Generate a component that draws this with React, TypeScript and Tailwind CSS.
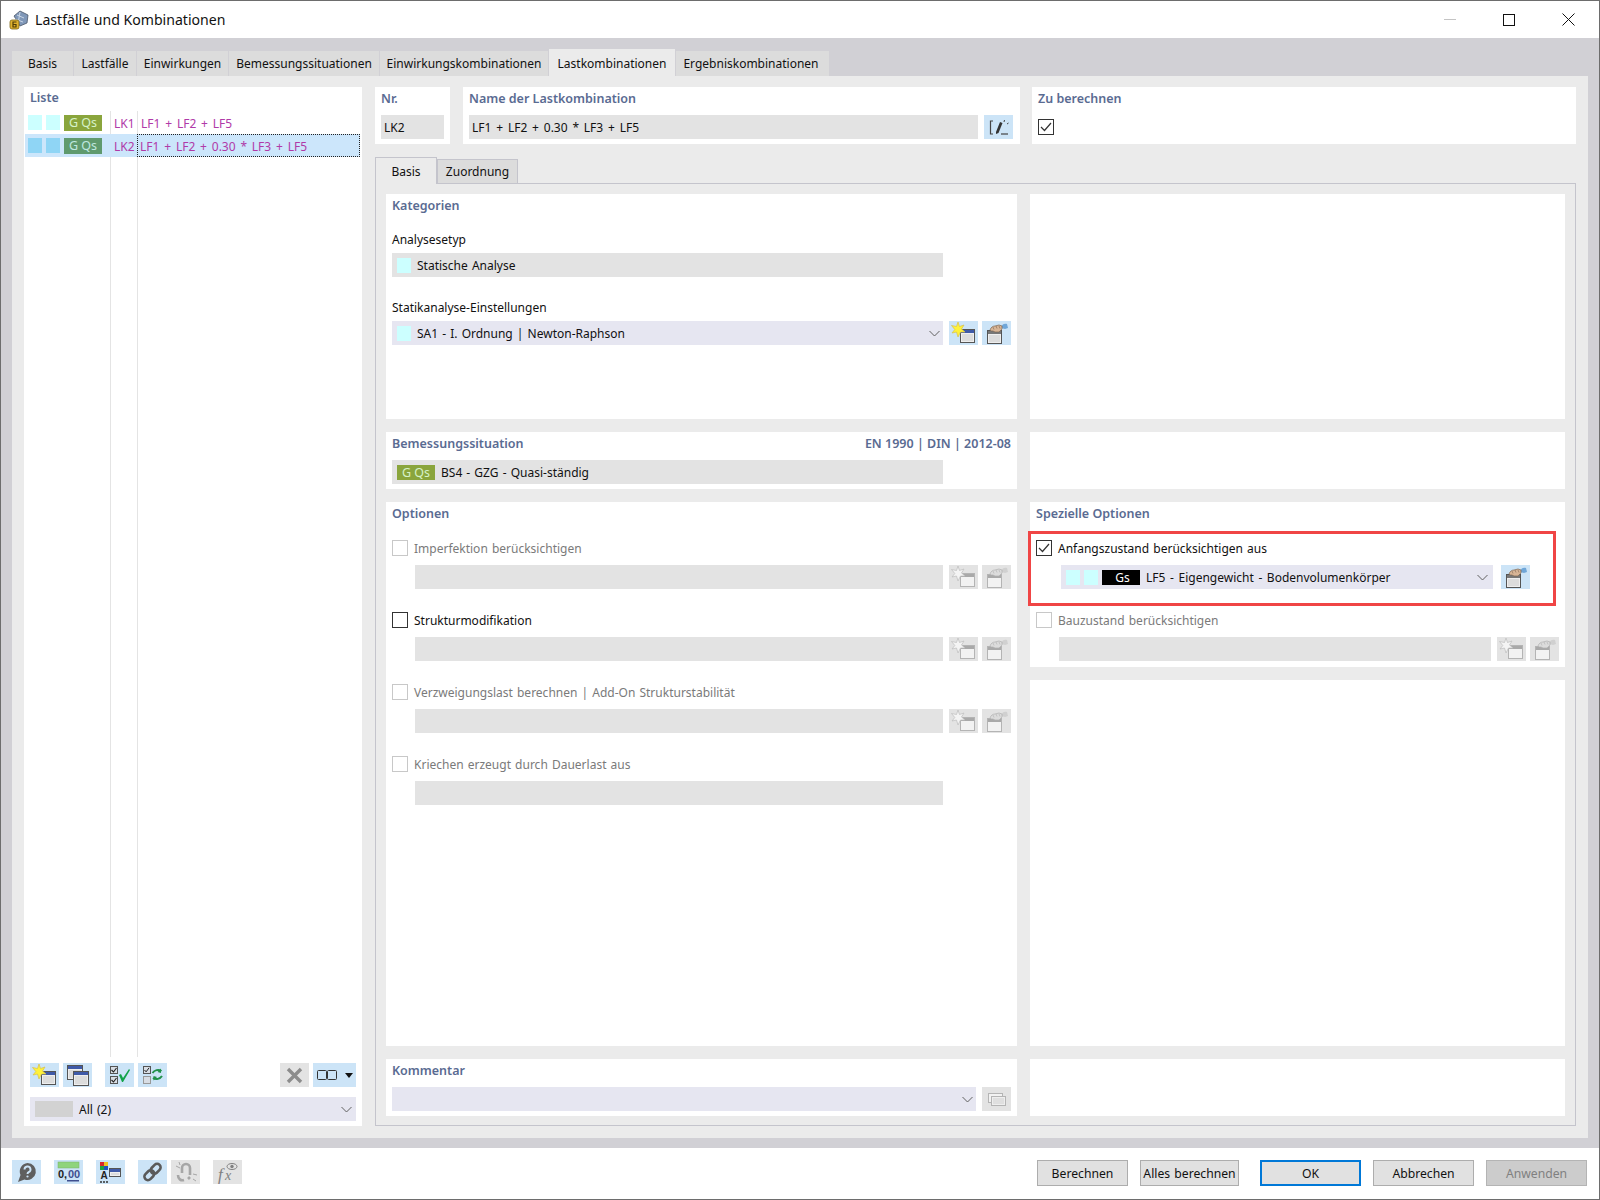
import React from "react";

const font = { fontFamily: '"Noto Sans", "Liberation Sans", sans-serif' };

function Win({ x, y, w, h, gray, bar }: { x: number; y: number; w: number; h: number; gray?: boolean; bar?: string }) {
  return (
    <g>
      <rect x={x + 0.5} y={y + 0.5} width={w} height={h} fill={gray ? "#f2f2f2" : "#eeeeee"} stroke={gray ? "#b4b4b4" : "#555"} />
      <rect x={x + 1} y={y + 1} width={w - 1} height={3} fill={gray ? "#a9a9a9" : bar || "#3f5aa8"} />
      {!gray && <rect x={x + 2} y={y + 5} width={w - 3} height={h - 6} fill="#dcdcdc" />}
    </g>
  );
}

function Star({ gray }: { gray?: boolean }) {
  return (
    <path
      d="M9 1l1.500 4.500 4.500-1.500-2.500 4 3.500 3-4.500 0L9 16 7.500 11 3 12l2.800-3.500L2.500 4.500l5 1z"
      fill={gray ? "#f4f4f4" : "#fff23a"}
      stroke={gray ? "#bdbdbd" : "#d9c24a"}
      strokeWidth="0.7"
    />
  );
}

function NewIcon({ gray }: { gray?: boolean }) {
  return (
    <svg width="29" height="24" viewBox="0 0 29 24">
      <Win x={11} y={8} w={14} h={13} gray={gray} />
      <Star gray={gray} />
    </svg>
  );
}

function EditIcon({ gray }: { gray?: boolean }) {
  const skin = gray ? "#dcdcdc" : "#d8b596";
  const line = gray ? "#b0b0b0" : "#7d6552";
  return (
    <svg width="29" height="24" viewBox="0 0 29 24">
      <Win x={5} y={9} w={14} h={13} gray={gray} bar="#777" />
      <path d="M19 7c0-3 3-5 6-4l1 4-3 1z" fill={gray ? "#d0d0d0" : "#6fa6d8"} />
      <path d="M8 9c1-3 3-4 5-4l4-1 3 1 0 3-3 3-4 0-2-1-2 0z" fill={skin} stroke={line} strokeWidth="0.7" />
      <path d="M11 6l1 2.500M14 5l1 2.500M17 5l1 2.500" stroke={line} strokeWidth="0.6" />
    </svg>
  );
}

function IconBtn({ children, disabled, w }: { children?: React.ReactNode; disabled?: boolean; w?: string }) {
  return (
    <div className={`flex h-[24px] items-center justify-center shrink-0 ${w || "w-[29px]"} ${disabled ? "bg-[#e3e3e3]" : "bg-[#cce4f7]"}`}>
      {children}
    </div>
  );
}

function Chevron() {
  return (
    <svg width="11" height="7" viewBox="0 0 11 7" className="shrink-0">
      <path d="M.5 1l5 5 5-5" fill="none" stroke="#606060" strokeWidth="1" />
    </svg>
  );
}

function Swatch({ c = "bg-[#ccffff]" }: { c?: string }) {
  return <div className={`h-[15px] w-[14px] shrink-0 ${c}`} />;
}

function Head({ children }: { children: React.ReactNode }) {
  return <div className="pt-[1px] text-[12.5px] font-semibold leading-[18px] text-[#5a6b92] [word-spacing:0px]">{children}</div>;
}

function Check({ checked, state }: { checked?: boolean; state: "on" | "off" }) {
  return (
    <div className={`flex h-[16px] w-[16px] shrink-0 items-center justify-center border ${state === "on" ? "border-[#333333]" : "border-[#c8c8c8]"} bg-white`}>
      {checked && (
        <svg width="12" height="10" viewBox="0 0 12 10">
          <path d="M1 5l3.500 3.500L11 1" fill="none" stroke="#333" strokeWidth="1.200" />
        </svg>
      )}
    </div>
  );
}

function OptionBlock({ label, on }: { label: string; on?: boolean }) {
  return (
    <div className="flex flex-col">
      <div className="flex h-[16px] items-center gap-[6px]">
        <Check state={on ? "on" : "off"} />
        <span className={`pt-[2px] ${on ? "text-[#111111]" : "text-[#7a7a7a]"}`}>{label}</span>
      </div>
      <div className="ml-[23px] mt-[9px] flex gap-[4px]">
        <div className="h-[24px] w-[528px] bg-[#e3e3e3]" />
        <div className="ml-[2px] flex gap-[4px]">
          <IconBtn disabled>
            <NewIcon gray />
          </IconBtn>
          <IconBtn disabled>
            <EditIcon gray />
          </IconBtn>
        </div>
      </div>
    </div>
  );
}

const tabs = [
  ["Basis", "w-[61px]"],
  ["Lastfälle", "w-[62px]"],
  ["Einwirkungen", "w-[91px]"],
  ["Bemessungssituationen", "w-[150px]"],
  ["Einwirkungskombinationen", "w-[168px]"],
];

function ListPanel() {
  return (
    <div className="flex h-[1039px] w-[338px] shrink-0 flex-col bg-white">
      <div className="flex h-[24px] pl-[6px] pt-[1px]">
        <Head>Liste</Head>
      </div>
      <div className="flex h-[946px] flex-col pl-[1px] text-[#b03aa8] [word-spacing:1.7px]">
        <div className="flex h-[23px] items-center">
          <div className="flex w-[85px] items-center gap-[4px] pl-[3px]">
            <Swatch />
            <Swatch />
            <div className="flex h-[16px] w-[38px] items-center justify-center bg-[#8aa53c] pt-[2px] text-[12.5px] text-[#d6f2c8] [word-spacing:0px]">G Qs</div>
          </div>
          <div className="flex h-full w-[27px] items-center border-l border-[#e4e4e4] pl-[3px] pt-[2px]">LK1</div>
          <div className="flex h-full flex-1 items-center border-l border-[#e4e4e4] pl-[3px] pt-[2px]">LF1 + LF2 + LF5</div>
        </div>
        <div className="flex h-[23px] items-center">
          <div className="flex h-full w-[85px] items-center gap-[4px] bg-[#cce6fb] pl-[3px]">
            <Swatch c="bg-[#8fd5f5]" />
            <Swatch c="bg-[#8fd5f5]" />
            <div className="flex h-[16px] w-[38px] items-center justify-center bg-[#5f9a6e] pt-[2px] text-[12.5px] text-[#bfe8e0] [word-spacing:0px]">G Qs</div>
          </div>
          <div className="flex h-full w-[27px] items-center bg-[#cce6fb] pl-[4px] pt-[2px]">LK2</div>
          <div className="mr-[2px] flex h-full flex-1 items-center border border-dotted border-[#222222] bg-[#cce6fb] pl-[2px] pt-[2px]">LF1 + LF2 + 0.30 * LF3 + LF5</div>
        </div>
        <div className="flex flex-1">
          <div className="w-[85px]" />
          <div className="w-[27px] border-l border-[#e4e4e4]" />
          <div className="flex-1 border-l border-[#e4e4e4]" />
        </div>
      </div>
      <div className="mt-[6px] flex px-[6px]">
        <div className="flex gap-[4px]">
          <IconBtn>
            <NewIcon />
          </IconBtn>
          <IconBtn>
            <svg width="29" height="24" viewBox="0 0 29 24">
              <Win x={4} y={2} w={15} h={14} />
              <Win x={10} y={8} w={15} h={14} />
            </svg>
          </IconBtn>
        </div>
        <div className="ml-[13px] flex gap-[4px]">
          <IconBtn>
            <svg width="29" height="24" viewBox="0 0 29 24">
              <rect x="5.500" y="3.500" width="7" height="7" fill="#d8dde4" stroke="#555" />
              <rect x="5.500" y="13.500" width="7" height="7" fill="#d8dde4" stroke="#555" />
              <path d="M6.500 7l2 2 3-4M6.500 17l2 2 3-4" fill="none" stroke="#222" strokeWidth="1.100" />
              <path d="M14 12l2-1 2 4 6-9 1 1-7 12h-1z" fill="#12a34a" />
            </svg>
          </IconBtn>
          <IconBtn>
            <svg width="29" height="24" viewBox="0 0 29 24">
              <rect x="5.500" y="3.500" width="7" height="7" fill="#d8dde4" stroke="#555" />
              <rect x="5.500" y="13.500" width="7" height="7" fill="#d8dde4" stroke="#999" />
              <path d="M6.500 7l1.600 1.800 3-4" fill="none" stroke="#222" strokeWidth="1" />
              <path d="M14.500 10c2-3 6-4 9-2M24 13c-2 3-6 4-9 2" fill="none" stroke="#22914a" strokeWidth="2" />
              <path d="M23 5.500V10l-3.500-1zM15.500 17.500V13l3.500 1z" fill="#22914a" />
            </svg>
          </IconBtn>
        </div>
        <div className="ml-auto flex gap-[4px]">
          <IconBtn disabled>
            <svg width="17" height="17" viewBox="0 0 17 17">
              <path d="M2 2l13 13M15 2L2 15" stroke="#8c8c8c" strokeWidth="3.400" />
            </svg>
          </IconBtn>
          <IconBtn w="w-[43px]">
            <div className="flex items-center gap-[8px]">
              <svg width="20" height="12" viewBox="0 0 20 12">
                <rect x="0.500" y="1.500" width="9" height="9" rx="1" fill="none" stroke="#333" />
                <rect x="10.500" y="1.500" width="9" height="9" rx="1" fill="none" stroke="#333" />
              </svg>
              <svg width="8" height="5" viewBox="0 0 8 5">
                <path d="M0 0h8L4 5z" fill="#111" />
              </svg>
            </div>
          </IconBtn>
        </div>
      </div>
      <div className="mx-[6px] mt-[10px] flex h-[24px] items-center bg-[#e6e6f1] pl-[5px] pr-[4px] text-[#111111]">
        <div className="h-[16px] w-[38px] bg-[#d2d2d2]" />
        <span className="ml-[6px] flex-1 pt-[2px]">All (2)</span>
        <Chevron />
      </div>
    </div>
  );
}

function LeftColumn() {
  return (
    <div className="flex w-[631px] shrink-0 flex-col gap-[13px]">
      <div className="flex h-[225px] flex-col bg-white px-[6px] pt-[2px] text-[#111111]">
        <Head>Kategorien</Head>
        <div className="mt-[16px] pb-[1px] leading-[18px]">Analysesetyp</div>
        <div className="mt-[3px] flex h-[24px] w-[551px] items-center bg-[#e3e3e3] pl-[5px]">
          <Swatch />
          <span className="ml-[6px] pt-[2px]">Statische Analyse</span>
        </div>
        <div className="mt-[22px] pb-[1px] leading-[18px]">Statikanalyse-Einstellungen</div>
        <div className="mt-[3px] flex items-center">
          <div className="flex h-[24px] w-[551px] items-center bg-[#e6e6f1] pl-[5px] pr-[3px]">
            <Swatch />
            <span className="ml-[6px] flex-1 pt-[2px]">SA1 - I. Ordnung | Newton-Raphson</span>
            <Chevron />
          </div>
          <div className="ml-[6px] flex gap-[4px]">
            <IconBtn>
              <NewIcon />
            </IconBtn>
            <IconBtn>
              <EditIcon />
            </IconBtn>
          </div>
        </div>
      </div>
      <div className="flex h-[57px] flex-col bg-white px-[6px] pt-[2px] text-[#111111]">
        <div className="flex justify-between">
          <Head>Bemessungssituation</Head>
          <Head>EN 1990 | DIN | 2012-08</Head>
        </div>
        <div className="mt-[7px] flex h-[24px] w-[551px] items-center bg-[#e3e3e3] pl-[5px]">
          <div className="flex h-[15px] w-[38px] items-center justify-center bg-[#8aa53c] pt-[2px] text-[12.5px] text-[#d6f2c8] [word-spacing:0px]">G Qs</div>
          <span className="ml-[6px] pt-[2px]">BS4 - GZG - Quasi-ständig</span>
        </div>
      </div>
      <div className="flex h-[544px] flex-col bg-white px-[6px] pt-[2px]">
        <Head>Optionen</Head>
        <div className="mt-[17px] flex flex-col gap-[23px]">
          <OptionBlock label="Imperfektion berücksichtigen" />
          <OptionBlock label="Strukturmodifikation" on />
          <OptionBlock label="Verzweigungslast berechnen | Add-On Strukturstabilität" />
          <div className="flex flex-col">
            <div className="flex h-[16px] items-center gap-[6px]">
              <Check state="off" />
              <span className="pt-[2px] text-[#7a7a7a]">Kriechen erzeugt durch Dauerlast aus</span>
            </div>
            <div className="ml-[23px] mt-[9px] h-[24px] w-[528px] bg-[#e3e3e3]" />
          </div>
        </div>
      </div>
      <div className="flex h-[57px] flex-col bg-white px-[6px] pt-[2px]">
        <Head>Kommentar</Head>
        <div className="mt-[7px] flex">
          <div className="flex h-[24px] w-[586px] items-center justify-end bg-[#e6e6f1] pr-[3px]">
            <Chevron />
          </div>
          <div className="ml-[6px]">
            <IconBtn disabled>
              <svg width="29" height="24" viewBox="0 0 29 24">
                <rect x="6.500" y="6.500" width="14" height="9" fill="#f2f2f2" stroke="#b4b4b4" />
                <rect x="9.500" y="9.500" width="14" height="9" fill="#eeeeee" stroke="#b4b4b4" />
                <path d="M11 12h11M11 14h11M11 16h11" stroke="#c8c8c8" strokeWidth="0.800" />
              </svg>
            </IconBtn>
          </div>
        </div>
      </div>
    </div>
  );
}

function RightColumn() {
  return (
    <div className="flex w-[535px] shrink-0 flex-col gap-[13px]">
      <div className="h-[225px] bg-white" />
      <div className="h-[57px] bg-white" />
      <div className="flex h-[165px] flex-col bg-white pt-[2px]">
        <div className="pl-[6px]">
          <Head>Spezielle Optionen</Head>
        </div>
        <div className="mt-[8px] ml-[-2px] flex h-[75px] w-[528px] flex-col border-[3px] border-[#f04545] pl-[5px] pt-[6px] text-[#111111]">
          <div className="flex h-[16px] items-center gap-[6px]">
            <Check checked state="on" />
            <span className="pt-[2px]">Anfangszustand berücksichtigen aus</span>
          </div>
          <div className="ml-[25px] mt-[9px] flex items-center">
            <div className="flex h-[24px] w-[432px] items-center bg-[#e6e6f1] pl-[5px] pr-[5px]">
              <Swatch />
              <div className="ml-[4px]">
                <Swatch />
              </div>
              <div className="ml-[4px] flex h-[15px] w-[38px] shrink-0 items-center justify-center bg-black pl-[3px] pt-[2px] text-white">Gs</div>
              <span className="ml-[6px] flex-1 pt-[2px] [word-spacing:1.5px]">LF5 - Eigengewicht - Bodenvolumenkörper</span>
              <Chevron />
            </div>
            <div className="ml-[8px]">
              <IconBtn>
                <EditIcon />
              </IconBtn>
            </div>
          </div>
        </div>
        <div className="ml-[6px] mt-[6px] flex h-[16px] items-center gap-[6px]">
          <Check state="off" />
          <span className="pt-[2px] text-[#7a7a7a]">Bauzustand berücksichtigen</span>
        </div>
        <div className="ml-[29px] mt-[9px] flex">
          <div className="h-[24px] w-[432px] bg-[#e3e3e3]" />
          <div className="ml-[6px] flex gap-[4px]">
            <IconBtn disabled>
              <NewIcon gray />
            </IconBtn>
            <IconBtn disabled>
              <EditIcon gray />
            </IconBtn>
          </div>
        </div>
      </div>
      <div className="h-[366px] bg-white" />
      <div className="h-[57px] bg-white" />
    </div>
  );
}

function FooterBtn({ label, w, kind }: { label: string; w: string; kind?: "ok" | "off" }) {
  const cls =
    kind === "ok"
      ? "border-2 border-[#0078d7] bg-[#e1e1e1] text-[#111111]"
      : kind === "off"
        ? "border border-[#b4b4b4] bg-[#cccccc] text-[#808080]"
        : "border border-[#adadad] bg-[#e1e1e1] text-[#111111]";
  return <div className={`flex h-[26px] items-center justify-center pt-[2px] text-[12.2px] ${w} ${cls}`}>{label}</div>;
}

export default function App() {
  return (
    <div className="flex h-[1200px] w-[1600px] flex-col border border-[#6d6d6d] bg-white text-[12px] [word-spacing:1px]" style={font}>
      {/* title bar */}
      <div className="flex h-[37px] shrink-0 items-center pl-[8px] pr-[24px]">
        <svg width="20" height="20" viewBox="0 0 20 20">
          <path d="M5 6l6-5 8 4-1 8-7 3z" fill="#7f97b8" stroke="#4a5668" strokeWidth="0.800" />
          <path d="M8 5l7 3M6 9l8 3M11 2l-2 12" stroke="#c9d6e6" strokeWidth="1" />
          <rect x="1" y="10" width="9" height="9" rx="2" fill="#e0b22e" stroke="#7c6414" strokeWidth="0.800" />
          <path d="M7.500 12H4v5h3v-2.500H4" fill="none" stroke="#4e3d08" strokeWidth="1.200" />
        </svg>
        <span className="ml-[6px] text-[14.1px] text-[#111111] [word-spacing:0px]">Lastfälle und Kombinationen</span>
        <div className="ml-auto flex items-center">
          <div className="h-[1px] w-[12px] bg-[#c4c4c4]" />
          <div className="ml-[47px] h-[12px] w-[12px] border border-[#111111]" />
          <svg className="ml-[47px]" width="13" height="13" viewBox="0 0 13 13">
            <path d="M.5.5l12 12M12.500.5l-12 12" stroke="#111" strokeWidth="1" />
          </svg>
        </div>
      </div>
      {/* dialog body */}
      <div className="flex h-[1110px] shrink-0 flex-col bg-[#d1d0d5] pl-[11px] pt-[11px]">
        <div className="flex h-[27px] items-end text-[#111111]">
          {tabs.map(([t, w]) => (
            <div key={t} className={`mr-[1px] flex h-[25px] items-center justify-center bg-[#dcdcdc] pt-[1px] ${w}`}>
              {t}
            </div>
          ))}
          <div className="mr-[1px] flex h-[27px] w-[126px] items-center justify-center bg-[#ebebeb] pt-[3px]">Lastkombinationen</div>
          <div className="flex h-[25px] w-[153px] items-center justify-center bg-[#dcdcdc] pr-[3px] pt-[1px]">Ergebniskombinationen</div>
        </div>
        <div className="flex h-[1062px] w-[1576px] bg-[#ebebeb] pl-[12px] pt-[11px]">
          <ListPanel />
          <div className="ml-[13px] flex w-[1201px] flex-col">
            <div className="flex h-[57px] gap-[12px] text-[#111111]">
              <div className="mr-[1px] w-[75px] bg-white px-[6px] pt-[2px]">
                <Head>Nr.</Head>
                <div className="mt-[7px] flex h-[24px] items-center bg-[#e3e3e3] pl-[3px] pt-[1px]">LK2</div>
              </div>
              <div className="w-[557px] bg-white px-[6px] pt-[2px]">
                <Head>Name der Lastkombination</Head>
                <div className="mt-[7px] flex">
                  <div className="flex h-[24px] w-[509px] items-center bg-[#e3e3e3] pl-[3px] pt-[1px] [word-spacing:1.7px]">LF1 + LF2 + 0.30 * LF3 + LF5</div>
                  <div className="ml-[6px]">
                    <IconBtn>
                      <svg width="29" height="24" viewBox="0 0 29 24">
                        <path d="M9 6H6.500v13H9" fill="none" stroke="#444" strokeWidth="1.200" />
                        <path d="M12 17l4-10 2.500 1-4 10-2.500 1z" fill="#333" />
                        <path d="M17 19h7" stroke="#444" strokeWidth="1.200" />
                        <path d="M20 7l.5-2M23 9l1.500-1" stroke="#444" strokeWidth="1" />
                      </svg>
                    </IconBtn>
                  </div>
                </div>
              </div>
              <div className="w-[544px] bg-white px-[6px] pt-[2px]">
                <Head>Zu berechnen</Head>
                <div className="mt-[11px]">
                  <Check checked state="on" />
                </div>
              </div>
            </div>
            <div className="mt-[13px] flex h-[26px] items-end text-[#111111]">
              <div className="z-10 mb-[-1px] flex h-[27px] w-[62px] items-center justify-center border border-b-0 border-[#c4c4cc] bg-[#ebebeb] pt-[2px]">Basis</div>
              <div className="flex h-[24px] w-[81px] items-center justify-center border border-b-0 border-[#c4c4cc] bg-[#dcdcdc]">Zuordnung</div>
            </div>
            <div className="flex h-[943px] gap-[13px] border border-[#c4c4cc] pl-[10px] pt-[10px]">
              <LeftColumn />
              <RightColumn />
            </div>
          </div>
        </div>
      </div>
      {/* footer */}
      <div className="flex flex-1 items-start pl-[11px] pr-[12px] pt-[12px]">
        <div className="flex">
          <IconBtn>
            <svg width="29" height="24" viewBox="0 0 29 24">
              <path d="M15.500 3a8.500 8.500 0 1 1-3 16.500L6 22l2.500-7A8.500 8.500 0 0 1 15.500 3z" fill="#5f5f5f" />
              <path d="M12.500 9.500a3 3 0 1 1 4.200 2.700c-1 .5-1.200 1-1.200 1.800" fill="none" stroke="#cce4f7" strokeWidth="1.900" />
              <circle cx="15.500" cy="16.500" r="1.100" fill="#cce4f7" />
            </svg>
          </IconBtn>
          <div className="ml-[13px]">
            <IconBtn>
              <svg width="29" height="24" viewBox="0 0 29 24">
                <rect x="4" y="2" width="21" height="6" fill="#8fd47c" stroke="#7ab06a" strokeWidth="0.500" />
                <text x="4" y="18" fontSize="11" fontWeight="600" fill="#222" fontFamily="Liberation Sans">0,</text>
                <text x="14" y="18" fontSize="11" fontWeight="600" fill="#3f4f8f" fontFamily="Liberation Sans">00</text>
                <rect x="13" y="20" width="12" height="1.500" fill="#3f4f8f" />
              </svg>
            </IconBtn>
          </div>
          <div className="ml-[13px]">
            <IconBtn>
              <svg width="29" height="24" viewBox="0 0 29 24">
                <rect x="4" y="2" width="4" height="4" fill="#d8262c" />
                <rect x="8" y="2" width="4" height="4" fill="#f0c020" />
                <rect x="4" y="6" width="4" height="4" fill="#20a040" />
                <rect x="8" y="6" width="4" height="4" fill="#2050c0" />
                <text x="4.500" y="19" fontSize="10" fontWeight="700" fill="#222" fontFamily="Liberation Sans">A</text>
                <path d="M4 22h2M7 22h2M10 22h2" stroke="#333" strokeWidth="1.500" />
                <Win x={13} y={8} w={11} h={8} />
              </svg>
            </IconBtn>
          </div>
          <div className="ml-[13px]">
            <IconBtn>
              <svg width="29" height="24" viewBox="0 0 29 24">
                <g transform="rotate(-45 14.500 12)" fill="none" stroke="#5a5a5a" strokeWidth="2.600">
                  <rect x="4.500" y="8.500" width="11" height="7" rx="3.500" />
                  <rect x="13.500" y="8.500" width="11" height="7" rx="3.500" />
                </g>
              </svg>
            </IconBtn>
          </div>
          <div className="ml-[4px]">
            <IconBtn disabled>
              <svg width="29" height="24" viewBox="0 0 29 24">
                <path d="M11 13V8a4 4 0 0 1 8 0v7M7 15c0 4 3 6 6 5M19 17l-2 2" fill="none" stroke="#a6a6a6" strokeWidth="2.600" />
                <path d="M5 6l4 2M8 2l1 3M22 14l4 1M22 19l3 2" stroke="#a6a6a6" strokeWidth="1" />
              </svg>
            </IconBtn>
          </div>
          <div className="ml-[13px]">
            <IconBtn disabled>
              <svg width="29" height="24" viewBox="0 0 29 24">
                <text x="5" y="20" fontSize="17" fontStyle="italic" fill="#808080" fontFamily="Liberation Serif">f</text>
                <text x="12" y="20" fontSize="14" fontStyle="italic" fill="#808080" fontFamily="Liberation Serif">x</text>
                <ellipse cx="19" cy="6.500" rx="5" ry="3" fill="none" stroke="#808080" strokeWidth="1" />
                <circle cx="19" cy="6.500" r="1.700" fill="#808080" />
              </svg>
            </IconBtn>
          </div>
        </div>
        <div className="ml-auto flex">
          <FooterBtn label="Berechnen" w="w-[91px]" />
          <div className="ml-[12px]">
            <FooterBtn label="Alles berechnen" w="w-[99px]" />
          </div>
          <div className="ml-[21px]">
            <FooterBtn label="OK" w="w-[101px]" kind="ok" />
          </div>
          <div className="ml-[12px]">
            <FooterBtn label="Abbrechen" w="w-[101px]" />
          </div>
          <div className="ml-[12px]">
            <FooterBtn label="Anwenden" w="w-[101px]" kind="off" />
          </div>
        </div>
      </div>
    </div>
  );
}
